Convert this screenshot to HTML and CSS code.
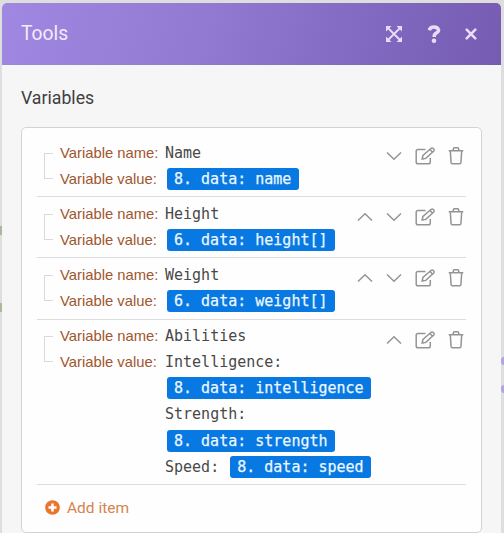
FILE: index.html
```html
<!DOCTYPE html>
<html lang="en">
<head>
<meta charset="utf-8">
<title>Tools</title>
<link rel="stylesheet" href="styles.css">
</head>
<body>
<svg class="defs" width="0" height="0">
  <symbol id="up" viewBox="0 0 16 20"><path d="M1 13.500 8 6.800l7 6.700"/></symbol>
  <symbol id="down" viewBox="0 0 16 20"><path d="M1 6.500 8 13.200l7-6.700"/></symbol>
  <symbol id="edit" viewBox="0 0 22 20"><path d="M11.500 3.500H4Q2.200 3.500 2.200 5.300V16Q2.200 17.800 4 17.800H14.500Q16.300 17.800 16.300 16V12M8.200 13l.7-3.500 8.300-7.200q1.200-.8 2.400.4t.2 2.400l-8 7.300ZM15.800 3.300l2.800 2.900"/></symbol>
  <symbol id="trash" viewBox="0 0 16 20"><path d="M.7 4.700H15.300M2.300 5l.8 11.700q.1 1.100 1.300 1.100h7.200q1.200 0 1.300-1.100L13.700 5M5 4.500l.5-2q.2-.8 1-.8h3q.8 0 1 .8l.5 2"/></symbol>
</svg>
<div class="panel">
  <header class="header">
    <h1>Tools</h1>
    <div class="controls">
      <svg width="18" height="18" viewBox="0 0 18 18" class="expand"><path d="M3 3 15 15M15 3 3 15"/><path class="solid" d="M1 1h5.500L1 6.500zM17 1v5.500L11.500 1zM1 17v-5.500L6.500 17zM17 17h-5.500L17 11.500z"/></svg>
      <svg width="14" height="18" viewBox="0 0 14 18" class="help"><path d="M2.200 5.200Q3.300 1.900 7 1.900T11.600 5.100Q11.600 6.800 9.300 8T7.200 12"/><circle cx="7" cy="15.700" r="2.300"/></svg>
      <svg width="12" height="12" viewBox="0 0 12 12" class="close"><path d="m1.700 1.700 8.600 8.600m0-8.600-8.600 8.600"/></svg>
    </div>
  </header>
  <main>
    <h2>Variables</h2>
    <section class="card">
      <div class="row">
        <i class="bracket"></i>
        <div class="fields">
          <label>Variable name:</label><div class="value">Name</div>
          <label>Variable value:</label><div class="value"><span class="pill">8. data: name</span></div>
        </div>
        <div class="actions"><svg class="chev"><use href="#down"/></svg><svg class="edit"><use href="#edit"/></svg><svg class="trash"><use href="#trash"/></svg></div>
      </div>
      <div class="row">
        <i class="bracket"></i>
        <div class="fields">
          <label>Variable name:</label><div class="value">Height</div>
          <label>Variable value:</label><div class="value"><span class="pill">6. data: height[]</span></div>
        </div>
        <div class="actions"><svg class="chev"><use href="#up"/></svg><svg class="chev"><use href="#down"/></svg><svg class="edit"><use href="#edit"/></svg><svg class="trash"><use href="#trash"/></svg></div>
      </div>
      <div class="row">
        <i class="bracket"></i>
        <div class="fields">
          <label>Variable name:</label><div class="value">Weight</div>
          <label>Variable value:</label><div class="value"><span class="pill">6. data: weight[]</span></div>
        </div>
        <div class="actions"><svg class="chev"><use href="#up"/></svg><svg class="chev"><use href="#down"/></svg><svg class="edit"><use href="#edit"/></svg><svg class="trash"><use href="#trash"/></svg></div>
      </div>
      <div class="row">
        <i class="bracket"></i>
        <div class="fields">
          <label>Variable name:</label><div class="value">Abilities</div>
          <label>Variable value:</label>
          <div class="value">
            <div>Intelligence:</div>
            <div><span class="pill">8. data: intelligence</span></div>
            <div>Strength:</div>
            <div><span class="pill">8. data: strength</span></div>
            <div>Speed: <span class="pill">8. data: speed</span></div>
          </div>
        </div>
        <div class="actions"><svg class="chev"><use href="#up"/></svg><svg class="edit"><use href="#edit"/></svg><svg class="trash"><use href="#trash"/></svg></div>
      </div>
      <div class="add">
        <svg width="15" height="15" viewBox="0 0 15 15"><circle cx="7.500" cy="7.500" r="7.300"/><path d="M7.500 3.500v8M3.500 7.500h8"/></svg>
        <span>Add item</span>
      </div>
    </section>
  </main>
</div>
<i class="node left first"></i><i class="node left second"></i>
<i class="node right third"></i><i class="node right fourth"></i>
</body>
</html>
```
FILE: styles.css
```css
* { box-sizing: border-box; }
body {
  margin: 0;
  padding: 3px 3px 0 2px;
  height: 533px;
  overflow: hidden;
  position: relative;
  background: #dedede;
  font-family: Roboto, "Liberation Sans", sans-serif;
}
.defs { position: absolute; }
.panel {
  height: 530px;
  overflow: hidden;
  background: #f6f6f6;
  border-radius: 5px 5px 0 0;
}
.header {
  height: 62px;
  padding: 0 24px 0 19px;
  display: flex;
  align-items: center;
  justify-content: space-between;
  background: linear-gradient(105deg, #a088e2 0%, #9279d2 40%, #8068c0 75%, #765cb1 100%);
}
h1 {
  margin: -1px 0 0;
  font-size: 19.300px;
  font-weight: 400;
  color: #f5eafc;
}
.controls { display: flex; align-items: center; }
.controls svg { fill: none; stroke: #eadcf8; }
.expand { stroke-width: 1.800; }
.controls .solid { fill: #eadcf8; stroke: none; }
.help { margin: 0 24px; stroke-width: 3.500; }
.controls circle { fill: #eadcf8; stroke: none; }
.close { stroke-width: 2.600; stroke-linecap: round; }
main { padding: 21px 19px 0; }
h2 {
  margin: 0 0 16px;
  height: 25px;
  line-height: 25px;
  font-size: 17.700px;
  font-weight: 400;
  color: #3f3f3f;
}
.card {
  height: 406px;
  padding: 12px 15px 0;
  background: #fefefe;
  border: 1.500px solid #d3d3d3;
  border-radius: 5px;
}
.row {
  display: flex;
  padding: 0 0 4.500px 7px;
  border-bottom: 1px solid #dcdcdc;
}
.row + .row { padding-top: 3.500px; }
.row:first-child { margin-top: -.5px; }
.bracket {
  width: 9px;
  height: 26px;
  margin: 13px 7px 0 0;
  border: 1px solid #d9d9d9;
  border-right: 0;
}
.fields {
  display: grid;
  grid-template-columns: 105px 1fr;
  line-height: 26.100px;
}
label {
  font-family: "Liberation Sans", sans-serif;
  font-size: 14.800px;
  color: #a0562e;
}
.value {
  font-family: "DejaVu Sans Mono", monospace;
  font-size: 15px;
  color: #484848;
}
.value > div { height: 26.150px; }
.pill {
  display: inline-block;
  height: 22px;
  line-height: 22px;
  margin: -1px 0 0 1.500px;
  padding: 0 7.500px;
  vertical-align: middle;
  border-radius: 3px;
  background: #0878e2;
  color: #eaf7ff;
  -webkit-text-stroke: .25px #eaf7ff;
}
.actions {
  margin: 6.500px 0 0 auto;
  display: flex;
  height: 20px;
  padding-right: 2px;
}
.actions svg { height: 20px; fill: none; stroke: #949494; stroke-width: 1.500; }
.chev { width: 16px; margin-right: 13px; }
.edit { width: 22px; margin: 0 12px 0 -1px; }
.trash { width: 16px; }
.add {
  display: flex;
  align-items: center;
  gap: 7px;
  height: 45px;
  padding-left: 8px;
  font-size: 15.500px;
  color: #d48550;
}
.add circle { fill: #e8772e; }
.add path { stroke: #fff; stroke-width: 2.500; }
.node { position: absolute; }
.left { left: 0; width: 2px; height: 9px; background: #a9b99f; }
.right { right: 0; width: 3px; height: 8px; border-radius: 4px 0 0 4px; background: #b4a3e0; }
.first { top: 226px; }
.second { top: 303px; }
.third { top: 357px; }
.fourth { top: 385px; }
```
